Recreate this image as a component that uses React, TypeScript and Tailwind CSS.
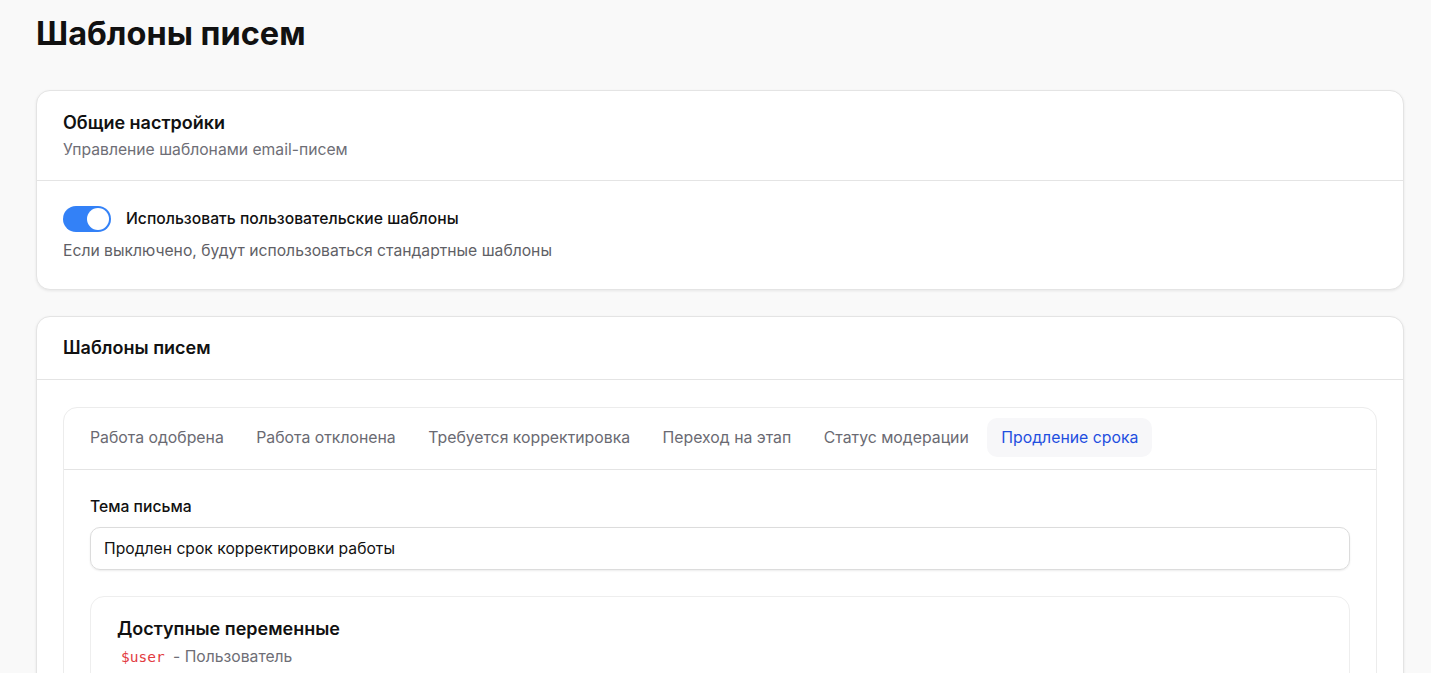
import React, { useState } from "react";

const tabs = [
  "Работа одобрена",
  "Работа отклонена",
  "Требуется корректировка",
  "Переход на этап",
  "Статус модерации",
  "Продление срока",
];

function Toggle({ on, onChange }: { on: boolean; onChange: (v: boolean) => void }) {
  return (
    <button
      onClick={() => onChange(!on)}
      className={`relative h-[26px] w-[48px] shrink-0 rounded-full transition-colors ${
        on ? "bg-[#3381f7]" : "bg-gray-300"
      }`}
    >
      <span
        className={`absolute top-[2px] h-[22px] w-[22px] rounded-full bg-white transition-all ${
          on ? "left-[24px]" : "left-[2px]"
        }`}
      />
    </button>
  );
}

export default function App() {
  const [custom, setCustom] = useState(true);
  const [active, setActive] = useState(5);

  return (
    <div className="min-h-screen bg-[#f9f9f9] pl-9 pr-[27px] pt-[14px] pb-10 text-[#111] font-['Inter','Noto_Sans',sans-serif]">
      <h1 className="text-[32.5px] font-bold leading-[40px]">Шаблоны писем</h1>

      <div className="mt-[36px] rounded-[14px] border border-[#e4e4e4] bg-white shadow-[0_1px_3px_rgba(0,0,0,0.08)]">
        <div className="border-b border-[#e4e4e4] px-[26px] pt-[19px] pb-[19px]">
          <h2 className="text-[18px] font-semibold leading-[26px]">Общие настройки</h2>
          <p className="mt-[3px] text-[15.7px] leading-[22px] text-[#6e6e76]">Управление шаблонами email-писем</p>
        </div>
        <div className="px-[26px] pt-[25px] pb-[27px]">
          <div className="flex items-center gap-[15px]">
            <Toggle on={custom} onChange={setCustom} />
            <span className="text-[15.7px] font-medium leading-[22px]">Использовать пользовательские шаблоны</span>
          </div>
          <p className="mt-[8px] text-[15.7px] leading-[22px] text-[#5f5f66]">
            Если выключено, будут использоваться стандартные шаблоны
          </p>
        </div>
      </div>

      <div className="mt-[26px] rounded-[14px] border border-[#e4e4e4] bg-white shadow-[0_1px_3px_rgba(0,0,0,0.08)]">
        <div className="border-b border-[#e4e4e4] px-[26px] pt-[18px] pb-[18px]">
          <h2 className="text-[18px] font-semibold leading-[26px]">Шаблоны писем</h2>
        </div>
        <div className="px-[26px] pt-[27px]">
          <div className="rounded-[14px] border border-[#ececec]">
            <div className="flex gap-[4.5px] border-b border-[#e4e4e4] px-[12px] pt-[10px] pb-[12px]">
              {tabs.map((t, i) => (
                <button
                  key={t}
                  onClick={() => setActive(i)}
                  className={`rounded-[10px] px-[14px] py-[8px] text-[15.8px] leading-[23px] ${
                    active === i ? "bg-[#f7f7f9] text-[#1f4fe0]" : "text-[#6a6a72]"
                  }`}
                >
                  {t}
                </button>
              ))}
            </div>
            <div className="px-[26px] pt-[26px]">
              <label className="block text-[15.7px] font-medium leading-[22px]">Тема письма</label>
              <div className="mt-[9px] flex h-[43px] items-center rounded-[10px] border border-[#dcdcdc] px-[13px] text-[15.7px] shadow-[0_1px_2px_rgba(0,0,0,0.08)]">
                Продлен срок корректировки работы
              </div>
              <div className="mt-[26px] rounded-[14px] border border-[#eeeeee] px-[26px] pt-[19px] pb-6">
                <h3 className="text-[18px] font-semibold leading-[26px]">Доступные переменные</h3>
                <div className="mt-[4px] text-[15.7px] leading-[22px]">
                  <code className="px-1 font-['DejaVu_Sans_Mono',monospace] text-[14.5px] text-[#e23b41]">$user</code>
                  <span className="text-[#6e6e76]"> - Пользователь</span>
                </div>
              </div>
            </div>
          </div>
        </div>
      </div>
    </div>
  );
}
